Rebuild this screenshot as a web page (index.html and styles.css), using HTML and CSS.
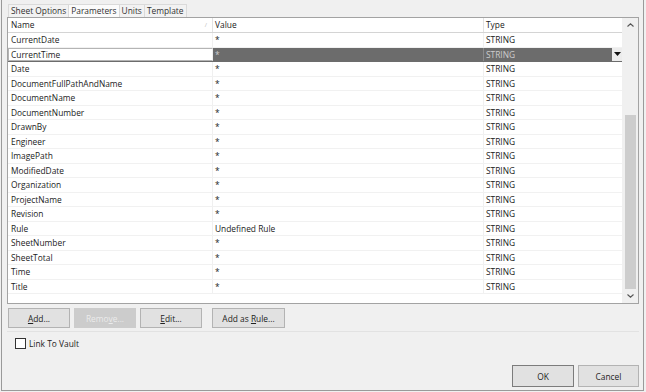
FILE: index.html
```html
<!DOCTYPE html>
<html>
<head>
<meta charset="utf-8">
<link rel="stylesheet" href="styles.css">
</head>
<body>
<div class="dialog">
  <div class="tabs">
    <div class="tab">Sheet Options</div>
    <div class="tab active">Parameters</div>
    <div class="tab">Units</div>
    <div class="tab">Template</div>
  </div>
  <div class="panel">
    <div class="grid">
      <div class="gridmain">
        <div class="row head">
          <div class="c name">Name<span class="sort">/</span></div>
          <div class="c value">Value</div>
          <div class="c type">Type</div>
        </div>
        <div class="row"><div class="c name">CurrentDate</div><div class="c value">*</div><div class="c type">STRING</div></div>
        <div class="row sel"><div class="c name">CurrentTime</div><div class="c value">*</div><div class="c type">STRING<span class="dd"><svg width="7" height="4" viewBox="0 0 7 4"><path d="M0 0H7L3.5 4Z" fill="#111"/></svg></span></div></div>
        <div class="row"><div class="c name">Date</div><div class="c value">*</div><div class="c type">STRING</div></div>
        <div class="row"><div class="c name">DocumentFullPathAndName</div><div class="c value">*</div><div class="c type">STRING</div></div>
        <div class="row"><div class="c name">DocumentName</div><div class="c value">*</div><div class="c type">STRING</div></div>
        <div class="row"><div class="c name">DocumentNumber</div><div class="c value">*</div><div class="c type">STRING</div></div>
        <div class="row"><div class="c name">DrawnBy</div><div class="c value">*</div><div class="c type">STRING</div></div>
        <div class="row"><div class="c name">Engineer</div><div class="c value">*</div><div class="c type">STRING</div></div>
        <div class="row"><div class="c name">ImagePath</div><div class="c value">*</div><div class="c type">STRING</div></div>
        <div class="row"><div class="c name">ModifiedDate</div><div class="c value">*</div><div class="c type">STRING</div></div>
        <div class="row"><div class="c name">Organization</div><div class="c value">*</div><div class="c type">STRING</div></div>
        <div class="row"><div class="c name">ProjectName</div><div class="c value">*</div><div class="c type">STRING</div></div>
        <div class="row"><div class="c name">Revision</div><div class="c value">*</div><div class="c type">STRING</div></div>
        <div class="row"><div class="c name">Rule</div><div class="c value">Undefined Rule</div><div class="c type">STRING</div></div>
        <div class="row"><div class="c name">SheetNumber</div><div class="c value">*</div><div class="c type">STRING</div></div>
        <div class="row"><div class="c name">SheetTotal</div><div class="c value">*</div><div class="c type">STRING</div></div>
        <div class="row"><div class="c name">Time</div><div class="c value">*</div><div class="c type">STRING</div></div>
        <div class="row"><div class="c name">Title</div><div class="c value">*</div><div class="c type">STRING</div></div>
      </div>
      <div class="vscroll">
        <div class="sbtn"><svg width="7" height="4" viewBox="0 0 7 4"><path d="M0.5 3.5L3.5 0.8L6.5 3.5" fill="none" stroke="#555" stroke-width="1.1"/></svg></div>
        <div class="track"><div class="thumb"></div></div>
        <div class="sbtn"><svg width="7" height="4" viewBox="0 0 7 4"><path d="M0.5 0.5L3.5 3.2L6.5 0.5" fill="none" stroke="#555" stroke-width="1.1"/></svg></div>
      </div>
    </div>
    <div class="actions">
      <button class="btn w62"><u>A</u>dd...</button>
      <button class="btn w62 disabled">Remo<u>v</u>e...</button>
      <button class="btn w62"><u>E</u>dit...</button>
      <button class="btn w73 gapl">Add as <u>R</u>ule...</button>
    </div>
  </div>
  <label class="check"><span class="box"></span>Link To Vault</label>
  <div class="footer">
    <button class="btn big default">OK</button>
    <button class="btn big">Cancel</button>
  </div>
</div>
</body>
</html>
```

FILE: styles.css
```css
* { box-sizing: border-box; }
html, body { margin: 0; padding: 0; background: #f0f0f0; }
body {
  font-family: "Open Sans", "Noto Sans", sans-serif;
  font-size: 8.4px;
  color: #222;
  width: 646px;
  height: 392px;
  overflow: hidden;
}
.dialog {
  margin-left: 1px;
  width: 643px;
  height: 391px;
  border: 1px solid #9a9a9a;
  border-top: none;
  padding: 4px 4px 3px 5px;
  display: flex;
  flex-direction: column;
}
.tabs {
  display: flex;
  height: 13px;
  margin-left: 1px;
}
.tab {
  height: 13px;
  line-height: 12px;
  padding: 0 2px;
  border: 1px solid #dadada;
  border-bottom: none;
  margin-right: -1px;
  background: #f2f2f2;
  color: #333;
}
.tab.active { background: #fbfbfb; }
.panel {
  display: flex;
  flex-direction: column;
  border-bottom: 1px solid #e2e2e2;
}
.grid {
  height: 287px;
  border: 1px solid #a3a3a3;
  background: #fff;
  display: flex;
}
.gridmain {
  width: 614px;
  display: flex;
  flex-direction: column;
}
.row {
  display: flex;
  height: 14.5px;
  border-bottom: 1px solid #f1f1f1;
}
.row.head {
  height: 15px;
  border-bottom: 1px solid #d4d4d4;
  background: #fff;
}
.c {
  line-height: 13.5px;
  white-space: nowrap;
  overflow: hidden;
  padding-left: 2px;
  position: relative;
}
.name { width: 205px; border-right: 1px solid #f0f0f0; padding-left: 3px; }
.value { width: 271px; border-right: 1px solid #f0f0f0; padding-left: 2px; }
.type { width: 138px; padding-left: 2px; }
.head .c { line-height: 14px; }
.head .name, .head .value { border-right-color: #e2e2e2; }
.sort {
  position: absolute;
  right: 5px;
  top: 0;
  color: #bbb;
  font-size: 6px;
}
.row.sel { background: #6c6c6c; border-bottom-color: #6c6c6c; }
.row.sel .name {
  background: #fff;
  border: 1px solid #b4b4b4;
  border-right: 1px solid #f0f0f0;
  padding-left: 2px;
  line-height: 12px;
}
.row.sel .value, .row.sel .type { color: #cdcdcd; }
.row.sel .value { border-right-color: #8a8a8a; }
.dd {
  position: absolute;
  right: 0;
  top: 0;
  width: 10px;
  height: 13px;
  background: #ececec;
  display: flex;
  align-items: center;
  justify-content: center;
}
.vscroll {
  width: 16px;
  background: #f0f0f0;
  display: flex;
  flex-direction: column;
}
.sbtn {
  height: 14px;
  display: flex;
  align-items: center;
  justify-content: center;
  padding-left: 1px;
}
.track {
  flex: 1;
  display: flex;
  flex-direction: column;
  justify-content: flex-end;
  padding: 0 2px 0 3px;
}
.thumb {
  height: 174px;
  background: #cdcdcd;
}
.actions {
  display: flex;
  gap: 4px;
  padding: 4px 0 3px 1px;
}
.btn {
  font-family: inherit;
  font-size: 8.4px;
  color: #222;
  height: 20px;
  padding: 0;
  margin: 0;
  background: #e1e1e1;
  border: 1px solid #b3b3b3;
  border-radius: 0;
}
.btn u { text-decoration: underline; text-underline-offset: 1px; }
.w62 { width: 62px; }
.w73 { width: 73px; }
.gapl { margin-left: 6px; }
.btn.disabled { background: #cccccc; border-color: #cccccc; color: #ebebeb; }
.check {
  display: flex;
  align-items: center;
  margin: 6px 0 0 8px;
  height: 11px;
  color: #222;
}
.box {
  width: 11px;
  height: 11px;
  border: 1px solid #333;
  background: #fff;
  margin-right: 3px;
}
.footer {
  margin-top: auto;
  display: flex;
  justify-content: flex-end;
  gap: 4px;
}
.btn.big { height: 22px; width: 61px; }
.btn.default { width: 62px; border-color: #7c7c7c; }
```
